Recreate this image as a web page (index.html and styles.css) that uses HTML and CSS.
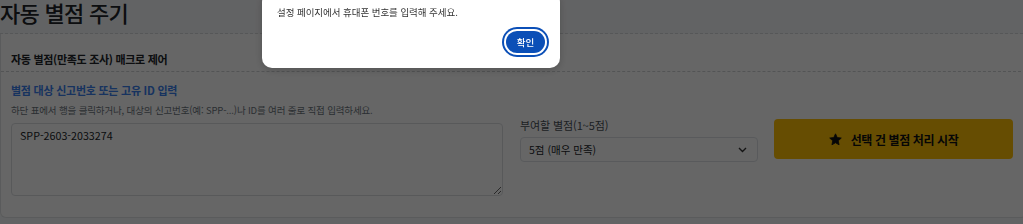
FILE: index.html
```html
<!DOCTYPE html>
<html lang="ko">
<head>
<meta charset="utf-8">
<title>자동 별점 주기</title>
<link rel="stylesheet" href="styles.css">
</head>
<body>
<div class="page">
  <h1 class="title">자동 별점 주기</h1>
  <section class="card">
    <div class="card-header">자동 별점(만족도 조사) 매크로 제어</div>
    <div class="card-body">
      <div class="field-title">별점 대상 신고번호 또는 고유 ID 입력</div>
      <div class="help">하단 표에서 행을 클릭하거나, 대상의 신고번호(예: SPP-...)나 ID를 여러 줄로 직접 입력하세요.</div>
      <div class="row">
        <textarea class="ids">SPP-2603-2033274</textarea>
        <div class="score">
          <label class="label">부여할 별점(1~5점)</label>
          <div class="select">
            <span>5점 (매우 만족)</span>
            <svg class="chev" width="9" height="6" viewBox="0 0 9 6"><path d="M1 1l3.5 3.5L8 1" fill="none" stroke="#333" stroke-width="1.4"/></svg>
          </div>
        </div>
        <button class="start">
          <svg class="star" width="13" height="13" viewBox="0 0 24 24"><path d="M12 1.5l3.2 6.9 7.5.9-5.6 5.1 1.5 7.4L12 18l-6.6 3.8 1.5-7.4L1.3 9.3l7.5-.9z" fill="#111" stroke="#111" stroke-width="1.5" stroke-linejoin="round"/></svg>
          <span>선택 건 별점 처리 시작</span>
        </button>
      </div>
    </div>
  </section>
</div>
<div class="overlay"></div>
<div class="modal">
  <p class="msg">설정 페이지에서 휴대폰 번호를 입력해 주세요.</p>
  <div class="actions"><button class="ok">확인</button></div>
</div>
</body>
</html>
```
FILE: styles.css
```css
* { box-sizing: border-box; }
html, body { margin: 0; padding: 0; }
body {
  background: #f6f8fa;
  font-family: "Noto Sans CJK KR", "Noto Sans", sans-serif;
  color: #212529;
  overflow: hidden;
  width: 1023px;
  height: 224px;
}
.title {
  margin: -2px 0 0 0;
  font-size: 22px;
  letter-spacing: -0.7px;
  line-height: 28px;
  font-weight: 500;
  padding-bottom: 7px;
  border-bottom: 1px dashed #d8dadc;
}
.card {
  margin-right: -4px;
  background: #fff;
  border: 1px solid #e2e4e6;
  border-top: 0;
  border-radius: 0 0 6px 6px;
}
.card-header {
  font-size: 11px;
  letter-spacing: -0.3px;
  font-weight: 700;
  line-height: 18px;
  padding: 16px 10px 3px;
  border-bottom: 1px dashed #cfd2d5;
}
.card-body {
  padding: 9px 10px 21px;
}
.field-title {
  font-size: 11px;
  letter-spacing: -0.25px;
  font-weight: 700;
  color: #3a80ee;
  line-height: 18px;
}
.help {
  font-size: 9.5px;
  letter-spacing: -0.15px;
  color: #6c757d;
  line-height: 16px;
  margin-top: 3px;
}
.row {
  display: grid;
  grid-template-columns: 492px 238px 238px;
  column-gap: 17px;
  align-items: start;
}
.ids {
  width: 492px;
  height: 73px;
  margin-top: 5px;
  border: 1px solid #dcdfe2;
  border-radius: 4px;
  padding: 3px 8px;
  font-family: "Noto Sans CJK KR", "Noto Sans", sans-serif;
  font-size: 10.7px;
  line-height: 18px;
  color: #212529;
  resize: vertical;
  display: block;
}
.score { display: flex; flex-direction: column; }
.label {
  font-size: 11px;
  letter-spacing: -0.1px;
  line-height: 15px;
  color: #495057;
}
.select {
  margin-top: 4px;
  height: 25px;
  border: 1px solid #dee2e6;
  border-radius: 4px;
  display: flex;
  align-items: center;
  justify-content: space-between;
  padding: 0 10px 0 8px;
  font-size: 10.5px;
  color: #212529;
}
.chev { margin-top: 1px; }
.start {
  margin-left: -1px;
  margin-top: 1px;
  height: 40px;
  border: 0;
  border-radius: 4px;
  background: #ffc107;
  display: flex;
  align-items: center;
  justify-content: center;
  gap: 9px;
  font-family: "Noto Sans CJK KR", "Noto Sans", sans-serif;
  font-size: 12px;
  letter-spacing: -0.4px;
  font-weight: 700;
  color: #111;
  padding: 0;
}
.overlay {
  position: fixed;
  inset: 0;
  background: rgba(0, 0, 0, 0.6);
}
.modal {
  position: fixed;
  top: -8px;
  left: 262px;
  width: 298px;
  background: #fff;
  border-radius: 10px;
  padding: 12px 11px 11px 14px;
  box-shadow: 0 2px 8px rgba(0,0,0,0.2);
}
.msg {
  margin: 0 0 0 1px;
  font-size: 9.5px;
  letter-spacing: -0.05px;
  line-height: 16px;
  color: #333;
}
.actions {
  display: flex;
  justify-content: flex-end;
  margin-top: 7px;
}
.ok {
  margin: 4px;
  width: 39px;
  height: 22px;
  border: 0;
  border-radius: 11px;
  background: #0b4fb7;
  color: #fff;
  font-family: "Noto Sans CJK KR", "Noto Sans", sans-serif;
  font-size: 9.5px;
  font-weight: 500;
  padding: 0;
  box-shadow: 0 0 0 2px #fff, 0 0 0 4px #0b4fb7;
}
```
